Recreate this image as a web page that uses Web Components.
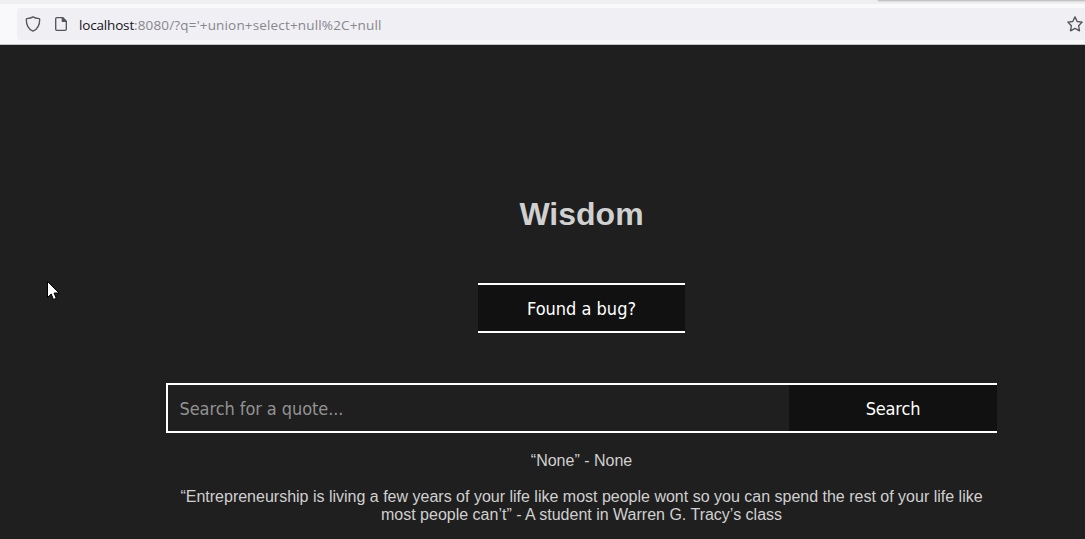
<!DOCTYPE html>
<html lang="en">
<head>
<meta charset="utf-8">
<title>Wisdom</title>
<style>
html,body{margin:0;height:100%;overflow:hidden;background:#1f1f1f}
</style>
</head>
<body>
<wisdom-window></wisdom-window>
<script>
function define(name, html) {
  customElements.define(name, class extends HTMLElement {
    constructor() {
      super();
      this.attachShadow({mode: 'open'}).innerHTML = html;
    }
  });
}

define('address-bar', `<style>
:host{display:block;box-sizing:border-box;height:45px;padding-top:4px;background:linear-gradient(#efefef 0 4px,#f9f9fb 4px 44px,#c4c4c6 44px);position:relative;font-family:"Open Sans","Noto Sans",sans-serif}
.edge{position:absolute;left:878px;right:0;top:0;height:1px;background:#c3c3c3;box-shadow:0 0 2px #aaa}
.field{box-sizing:border-box;height:32px;margin:4px 0 0 17px;background:#f0eff4;border-radius:4px 0 0 4px;display:flex;align-items:center;padding-left:8px;color:#87878c;font-size:13.5px}
svg{display:block;flex:none;fill:none;stroke:#55555c;stroke-width:1.35;stroke-linejoin:round;stroke-linecap:round}
.page{margin-left:12px}
.url{margin-left:10px;white-space:pre;line-height:18px;position:relative;top:1px}
.host{color:#15141a;letter-spacing:-.17px}
.rest{letter-spacing:.16px}
.star{margin-left:auto;margin-right:2px}
</style>
<div class="edge"></div>
<div class="field">
<svg width="16" height="16" viewBox="0 0 16 16"><path d="M8 .9C6.300 2.200 4.100 2.500 1.900 2.600Q1.300 2.700 1.300 3.400C1.300 8.600 3 13 8 15.100C13 13 14.700 8.600 14.700 3.400Q14.700 2.700 14.100 2.600C11.900 2.500 9.700 2.200 8 .9Z"/></svg>
<svg class="page" width="16" height="16" viewBox="0 0 16 16"><path d="M9.500 1.600H3.800Q2.700 1.600 2.700 2.700V13.300Q2.700 14.400 3.800 14.400H12.200Q13.300 14.400 13.300 13.300V5.400ZM9.500 1.600V5.400H13.300"/><path d="M9.500 1.600V5.400H13.300Z" fill="#55555c"/></svg>
<div class="url"><span class="host">localhost</span><span class="rest">:8080/?q='+union+select+null%2C+null</span></div>
<svg class="star" width="16" height="16" viewBox="0 0 16 16"><path d="M8 .9L10.200 5.500L15.200 6.100L11.600 9.700L12.500 14.800L8 12.400L3.500 14.800L4.400 9.700L.8 6.100L5.800 5.500Z"/></svg>
</div>`);

define('action-button', `<style>
:host{display:block;box-sizing:border-box;height:50px;border:solid #fff;border-width:2px 0}
button{display:block;box-sizing:border-box;width:100%;height:46px;border:0;border-radius:0;padding:2px 0 0;background:#111;color:#fff;font:18px/44px "DejaVu Sans Condensed","DejaVu Sans",sans-serif;font-stretch:condensed;letter-spacing:var(--track,0)}
</style><button><slot></slot></button>`);

define('quote-search', `<style>
:host{display:flex;height:50px}
input{box-sizing:border-box;flex:1;min-width:0;height:50px;border:2px solid #fff;border-right:0;border-radius:0;outline:0;margin:0;padding:0 11.500px;background:#1f1f1f;color:#fff;font:18px "DejaVu Sans Condensed","DejaVu Sans",sans-serif;font-stretch:condensed;letter-spacing:-.07px}
input::placeholder{color:#929292;opacity:1}
action-button{width:208px;flex:none;--track:-.15px}
</style><input placeholder="Search for a quote..."><action-button>Search</action-button>`);

define('quote-item', `<style>
:host{display:block;margin-top:18px;text-align:center;font:16px/18px "Liberation Sans",Arial,sans-serif;color:#d0d0d0}
</style><slot></slot>`);

define('wisdom-page', `<style>
:host{display:block;box-sizing:border-box;width:831px;margin-left:166px;padding-top:151px;font-family:"Liberation Sans",Arial,sans-serif;color:#d0d0d0}
h1{margin:0;font-size:32px;line-height:36px;text-align:center}
.bug{width:207px;margin:51px auto 50px}
quote-search{margin-bottom:19px}
</style>
<h1>Wisdom</h1>
<action-button class="bug">Found a bug?</action-button>
<quote-search></quote-search>
<quote-item>“None” - None</quote-item>
<quote-item>“Entrepreneurship is living a few years of your life like most people wont so you can spend the rest of your life like most people can’t” - A student in Warren G. Tracy’s class</quote-item>`);

define('mouse-pointer', `<style>
:host{display:block;position:absolute;left:47px;top:281px}
svg{display:block}
</style><svg width="13" height="21" viewBox="0 0 13 21"><path d="M.5 .5V16.500L4.200 13L6.500 18.500L9.300 17.300L7 12H12Z" fill="#fff" stroke="#000" stroke-width="1"/></svg>`);

define('wisdom-window', `<style>
:host{display:block;position:relative;height:539px;overflow:hidden;background:#1f1f1f}
</style><address-bar></address-bar><wisdom-page></wisdom-page><mouse-pointer></mouse-pointer>`);
</script>
</body>
</html>
